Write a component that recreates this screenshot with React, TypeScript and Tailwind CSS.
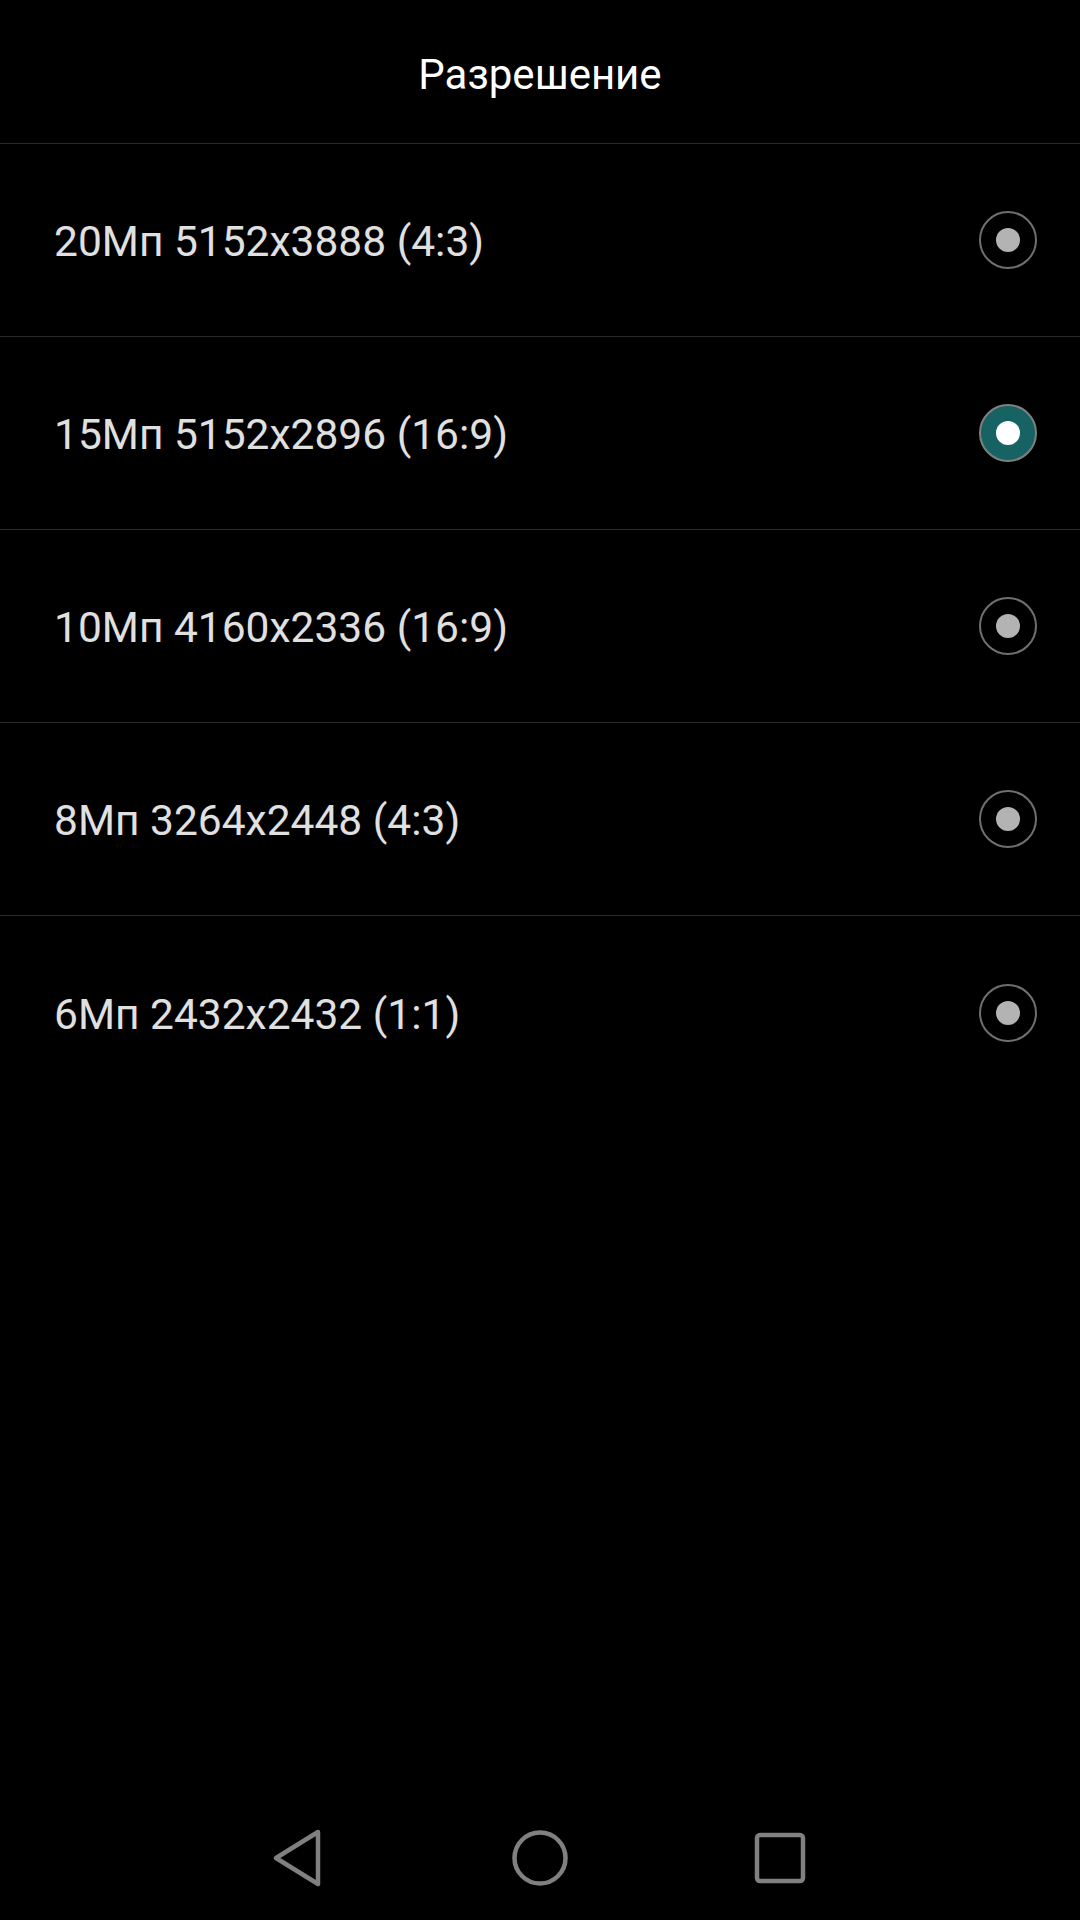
import { useState } from 'react';

const options = [
  '20Мп 5152x3888 (4:3)',
  '15Мп 5152x2896 (16:9)',
  '10Мп 4160x2336 (16:9)',
  '8Мп 3264x2448 (4:3)',
  '6Мп 2432x2432 (1:1)',
];

function Radio({ checked }: { checked: boolean }) {
  return checked ? (
    <div className="w-[58px] h-[58px] rounded-full border-2 border-[#7f7f7f] bg-[#176262] flex items-center justify-center">
      <div className="w-[24px] h-[24px] rounded-full bg-white" />
    </div>
  ) : (
    <div className="w-[58px] h-[58px] rounded-full border-2 border-[#6f6f6f] flex items-center justify-center">
      <div className="w-[24px] h-[24px] rounded-full bg-[#b3b3b3]" />
    </div>
  );
}

export default function App() {
  const [selected, setSelected] = useState(1);

  return (
    <div
      className="w-[1080px] h-[1920px] bg-black flex flex-col"
      style={{ fontFamily: 'Roboto, "Noto Sans", sans-serif' }}
    >
      {/* заголовок */}
      <div className="h-[144px] shrink-0 flex items-center justify-center border-b border-[#2b2b2b]">
        <span className="text-[42px] text-white pt-[6px]">Разрешение</span>
      </div>

      {/* список */}
      <div className="flex flex-col">
        {options.map((opt, i) => (
          <button
            key={opt}
            onClick={() => setSelected(i)}
            className={
              'h-[193px] flex items-center justify-between pl-[54px] pr-[43px] text-left ' +
              (i < options.length - 1 ? 'border-b border-[#2b2b2b]' : '')
            }
          >
            <span className="text-[42.5px] text-[#e0e0e0] pt-[4px]">{opt}</span>
            <Radio checked={selected === i} />
          </button>
        ))}
      </div>

      <div className="flex-1" />

      {/* навигация */}
      <div className="h-[124px] shrink-0 flex items-center justify-center gap-[180px]">
        <svg width="60" height="60" viewBox="0 0 60 60" fill="none">
          <path
            d="M48 4 L6 30 L48 56 Z"
            stroke="#808080"
            strokeWidth="4.5"
            strokeLinejoin="round"
          />
        </svg>
        <svg width="60" height="60" viewBox="0 0 60 60" fill="none">
          <circle cx="30" cy="30" r="25.5" stroke="#808080" strokeWidth="4.5" />
        </svg>
        <svg width="60" height="60" viewBox="0 0 60 60" fill="none">
          <rect x="7" y="7" width="46" height="46" rx="3" stroke="#808080" strokeWidth="4.5" />
        </svg>
      </div>
    </div>
  );
}
